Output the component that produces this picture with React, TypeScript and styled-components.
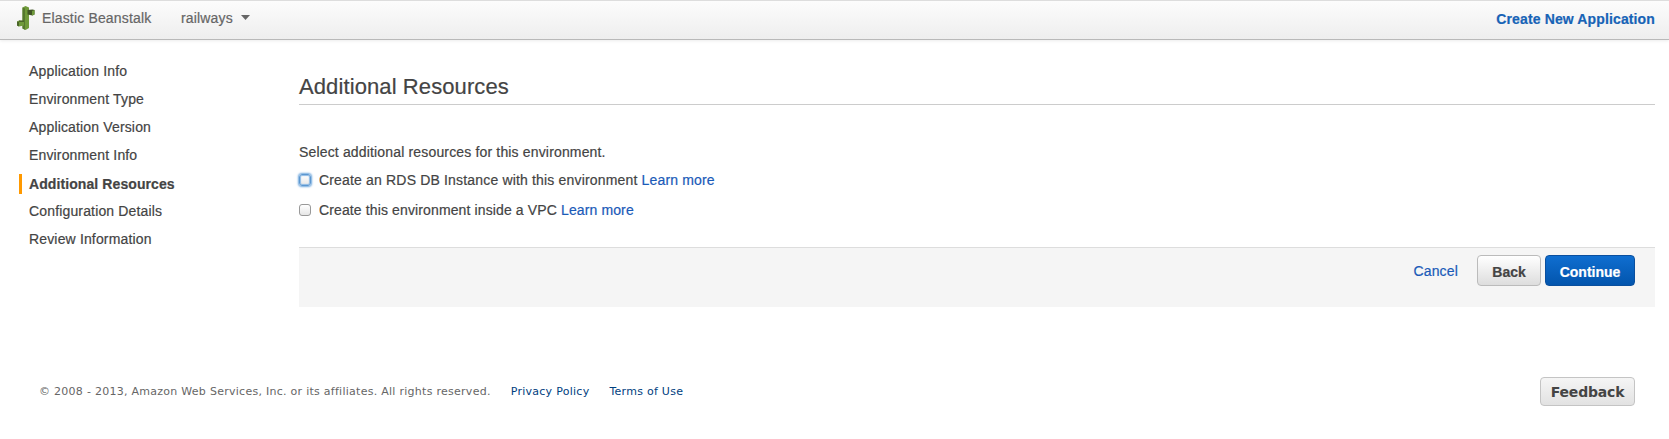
import React from 'react';
import styled, { createGlobalStyle } from 'styled-components';

const GlobalStyle = createGlobalStyle`
  *, *::before, *::after { box-sizing: border-box; }
  body {
    margin: 0;
    background: #fff;
    color: #444;
    font-family: "Liberation Sans", Arial, sans-serif;
    font-size: 14px;
    line-height: 20px;
    letter-spacing: 0.16px;
    -webkit-text-stroke: 0.2px;
  }
  a { text-decoration: none; }
`;

const Header = styled.header`
  display: flex;
  align-items: center;
  height: 40px;
  padding: 0 14px 5px 17px;
  border-top: 1px solid #ddd;
  border-bottom: 1px solid #b9b9b9;
  background: linear-gradient(#fcfcfc, #eee);
  box-shadow: 0 1px 3px rgba(0, 0, 0, 0.08);
  white-space: nowrap;
  color: #666;
`;

const Brand = styled.div`
  display: flex;
  align-items: center;
  gap: 7px;
  width: 164px;
`;

const AppMenu = styled.div`
  display: flex;
  align-items: center;
  gap: 8px;
`;

const CreateLink = styled.a`
  margin-left: auto;
  padding-top: 2px;
  color: #1763b6;
  font-weight: bold;
  letter-spacing: 0.13px;
`;

const Page = styled.div`
  display: flex;
  padding: 17px 14px 0 19px;
`;

const Nav = styled.nav`
  display: flex;
  flex-direction: column;
  width: 280px;
`;

const NavItem = styled.a<{ $active?: boolean }>`
  height: 20px;
  margin: ${p => (p.$active ? '5px 0 3px' : '4px 0')};
  padding-left: ${p => (p.$active ? '7px' : '10px')};
  border-left: ${p => (p.$active ? '3px solid #f90' : '0')};
  font-weight: ${p => (p.$active ? 'bold' : 'normal')};
  letter-spacing: ${p => (p.$active ? '0.09px' : '0.155px')};
  color: #444;
`;

const Main = styled.main`
  flex: 1;
`;

const Title = styled.h1`
  height: 48px;
  margin: 0;
  padding-top: 15px;
  border-bottom: 1px solid #ccc;
  font-size: 22px;
  line-height: 30px;
  font-weight: normal;
  letter-spacing: 0.1px;
`;

const Intro = styled.p`
  margin: 37px 0 0;
`;

const Option = styled.label<{ $gap: number; $tracking: number }>`
  display: flex;
  align-items: center;
  gap: 8px;
  height: 20px;
  margin-top: ${p => p.$gap}px;
  letter-spacing: ${p => p.$tracking}px;
`;

const Check = styled.input<{ $focused?: boolean }>`
  appearance: none;
  flex: none;
  width: 12px;
  height: 12px;
  margin: 0;
  border: 1px solid ${p => (p.$focused ? '#5d97d0' : '#999')};
  border-radius: 3px;
  background: linear-gradient(#fff, #e6e6e6);
  box-shadow: ${p => (p.$focused ? '0 0 2px 1px #6fa8de, inset 0 0 1px 1px #8dbbe6' : 'none')};
`;

const Link = styled.a`
  color: #1a5ab8;
`;

const Actions = styled.div`
  display: flex;
  align-items: flex-start;
  justify-content: flex-end;
  height: 60px;
  margin-top: 27px;
  padding: 7px 20px 0;
  border-top: 1px solid #ddd;
  background: #f5f5f5;
`;

const Cancel = styled(Link)`
  margin: 6px 19px 0 0;
`;

const Button = styled.button<{ $primary?: boolean }>`
  height: 31px;
  width: ${p => (p.$primary ? 90 : 64)}px;
  margin-left: ${p => (p.$primary ? 4 : 0)}px;
  padding: 3px 0 0;
  border: 1px solid ${p => (p.$primary ? '#0a4f9e' : '#bbb')};
  border-radius: 4px;
  background: ${p => (p.$primary ? 'linear-gradient(#0f6ed0, #0355ad)' : 'linear-gradient(#fff, #ddd)')};
  color: ${p => (p.$primary ? '#fff' : '#444')};
  font: bold 14px "Liberation Sans", Arial, sans-serif;
  letter-spacing: 0;
`;

const Footer = styled.footer`
  display: flex;
  align-items: center;
  gap: 20px;
  margin-top: 70px;
  padding: 0 34px 0 39px;
  font-family: "DejaVu Sans", Verdana, sans-serif;
  font-size: 11px;
  letter-spacing: 0.27px;
  color: #666;
  -webkit-text-stroke: 0;
`;

const FooterLink = styled.a`
  color: #004080;
`;

const Feedback = styled.button`
  width: 95px;
  height: 29px;
  margin-left: auto;
  padding: 1px 0 0;
  border: 1px solid #c4c4c4;
  border-radius: 4px;
  background: linear-gradient(#f5f5f5, #e2e2e2);
  color: #444;
  font: bold 14px "DejaVu Sans", Verdana, sans-serif;
  letter-spacing: -0.2px;
`;

const steps = [
  'Application Info',
  'Environment Type',
  'Application Version',
  'Environment Info',
  'Additional Resources',
  'Configuration Details',
  'Review Information',
];

const Logo = () => (
  <svg width="18" height="24" viewBox="0 0 18 24">
    <path d="M5.5 1.5 8.5 0 12 1.5V22L8.5 24 5.5 22.5Z" fill="#6f9a3a" />
    <path d="M5.5 1.5 8 2.5V23.7L5.5 22.5Z" fill="#55782e" />
    <path d="M10.5 4 15.5 3.5 17.5 4V8.5L15.5 9.5 10.5 8.5Z" fill="#405525" />
    <path d="M15 5 17.5 4V8.5L15 9.5Z" fill="#6f9a3a" />
    <path d="M0 15.5 2 14.5 7 15V19.5L2 20.5 0 19.5Z" fill="#6f9a3a" />
    <path d="M0 15.5 2 16V20.5L0 19.5Z" fill="#4b6529" />
    <path d="M2 14.5 7 14.5V16L2 16Z" fill="#4b6529" />
  </svg>
);

export default function App() {
  return (
    <>
      <GlobalStyle />
      <Header>
        <Brand>
          <Logo />
          <span>Elastic Beanstalk</span>
        </Brand>
        <AppMenu>
          <span>railways</span>
          <svg width="9" height="5" viewBox="0 0 9 5">
            <path d="M0 0H9L4.5 5Z" fill="#666" />
          </svg>
        </AppMenu>
        <CreateLink>Create New Application</CreateLink>
      </Header>
      <Page>
        <Nav>
          {steps.map(step => (
            <NavItem key={step} $active={step === 'Additional Resources'}>{step}</NavItem>
          ))}
        </Nav>
        <Main>
          <Title>Additional Resources</Title>
          <Intro>Select additional resources for this environment.</Intro>
          <Option $gap={8} $tracking={0.17}>
            <Check type="checkbox" $focused />
            <span>Create an RDS DB Instance with this environment <Link>Learn more</Link></span>
          </Option>
          <Option $gap={10} $tracking={0.125}>
            <Check type="checkbox" />
            <span>Create this environment inside a VPC <Link>Learn more</Link></span>
          </Option>
          <Actions>
            <Cancel>Cancel</Cancel>
            <Button>Back</Button>
            <Button $primary>Continue</Button>
          </Actions>
        </Main>
      </Page>
      <Footer>
        <span>© 2008 - 2013, Amazon Web Services, Inc. or its affiliates. All rights reserved.</span>
        <FooterLink>Privacy Policy</FooterLink>
        <FooterLink>Terms of Use</FooterLink>
        <Feedback>Feedback</Feedback>
      </Footer>
    </>
  );
}
